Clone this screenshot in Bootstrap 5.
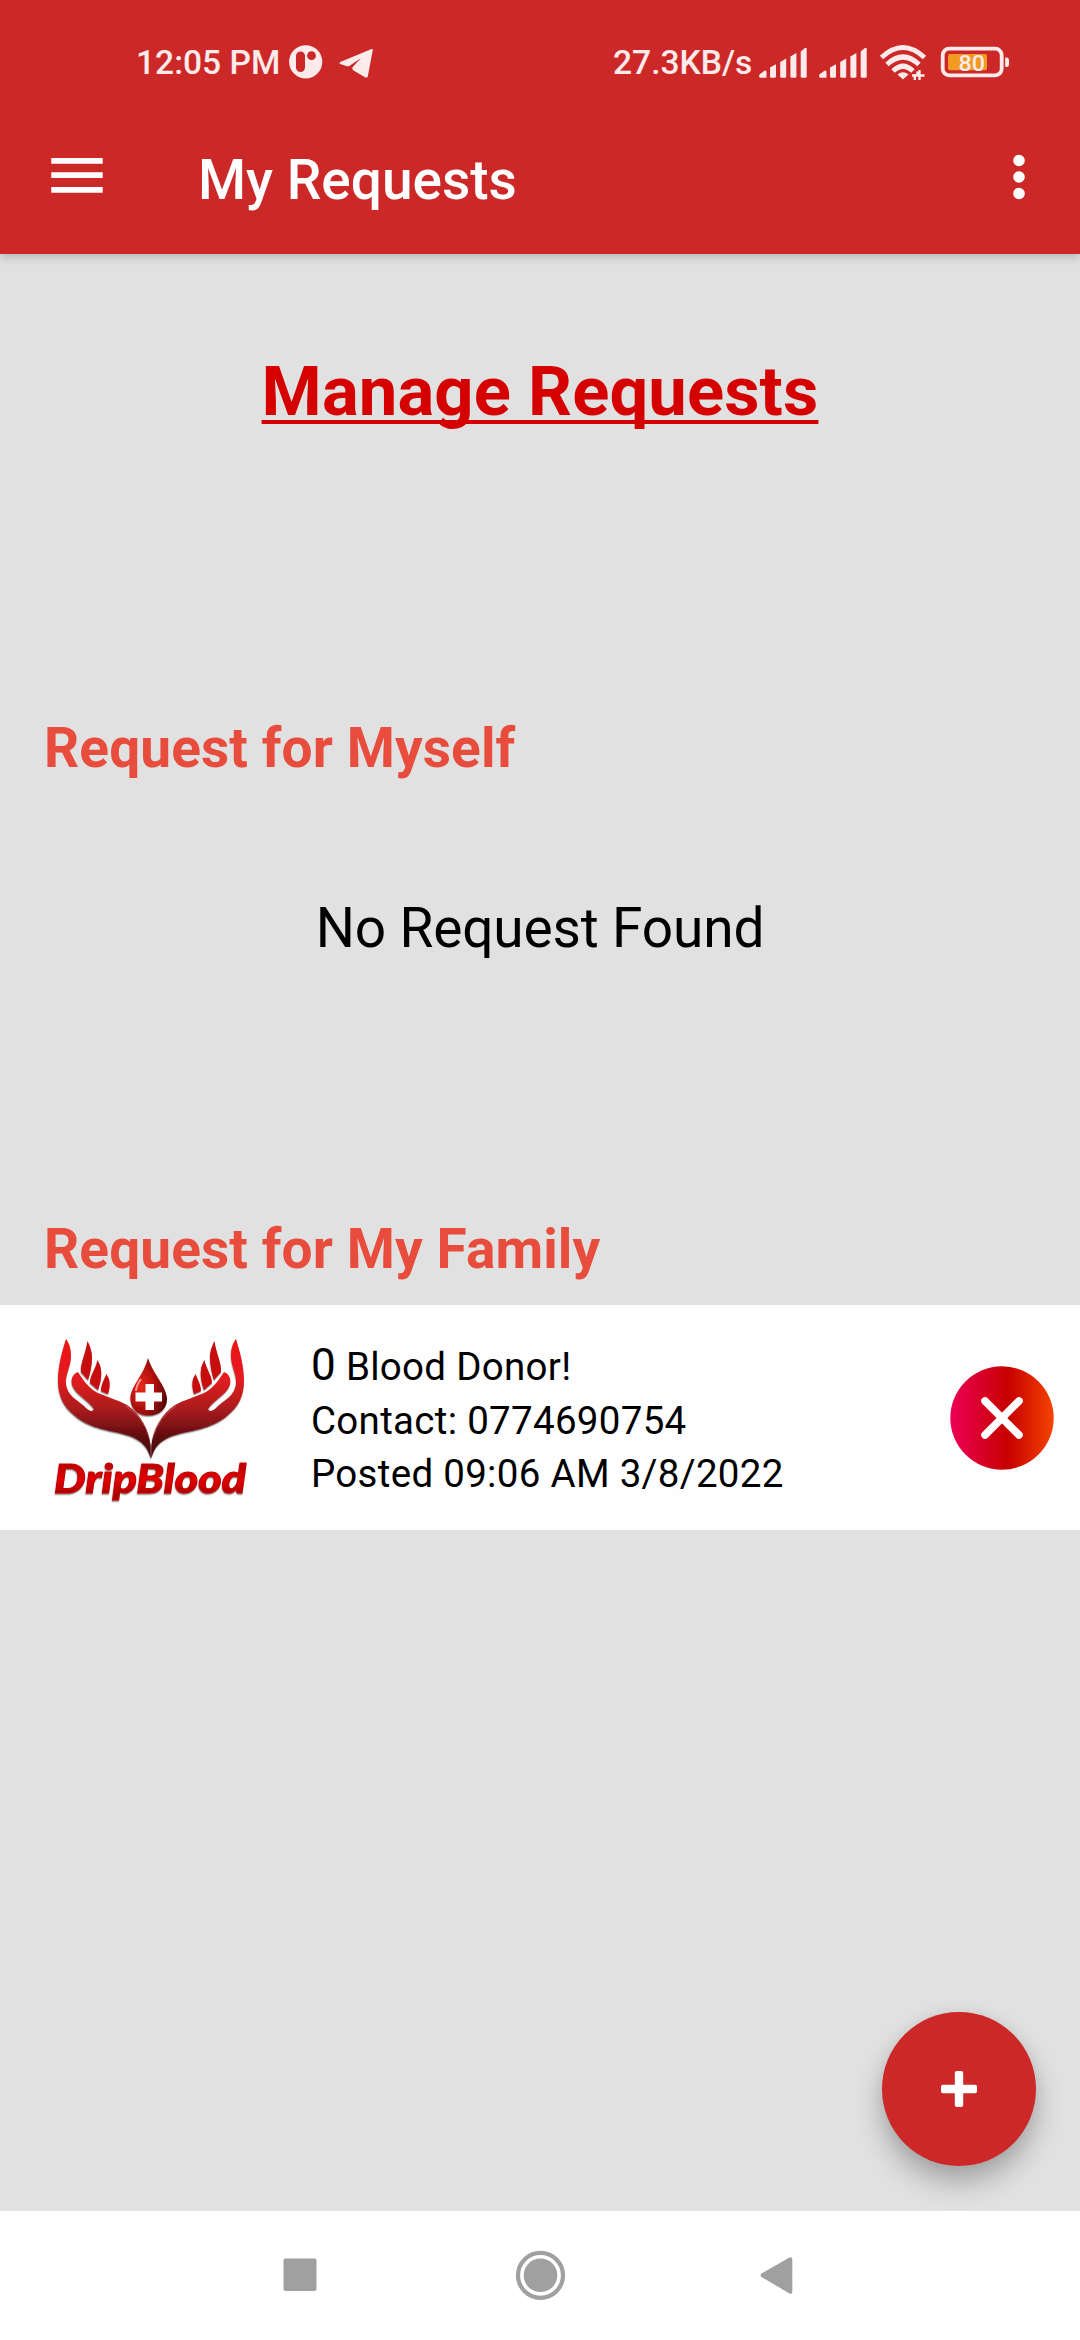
<!DOCTYPE html>
<html lang="en">
<head>
<meta charset="utf-8">
<title>My Requests</title>
<link href="https://cdn.jsdelivr.net/npm/bootstrap@5.3.0/dist/css/bootstrap.min.css" rel="stylesheet">
<style>
body{font-family:Roboto,"Liberation Sans",sans-serif;background:#e1e1e1;color:#000;width:1080px;height:2340px;overflow:hidden}
svg{display:block;flex:none}
.app-head{background:#cb2827;height:254px;box-shadow:0 3px 9px rgba(0,0,0,.2);z-index:1}
.status-row{height:124px;color:#fdeaea;font-size:33.6px;font-weight:500;line-height:40px;padding:43px 0 0 136px;white-space:nowrap}
.clock{width:152px}
.net-speed{margin-left:237px;width:146px}
.app-bar{height:129px;padding-left:51px}
.app-title{font-size:55px;font-weight:500;line-height:64px;margin:24px 0 0 95px;width:800px}
.page-title{font-size:68.75px;font-weight:700;line-height:80px;letter-spacing:.1px;color:#d50000;margin:98px 0 0;text-decoration:underline;text-decoration-thickness:3.6px;text-underline-offset:5px;text-decoration-skip-ink:none}
.sect{font-size:55px;font-weight:700;line-height:64px;letter-spacing:.1px;color:#e74c3c;padding-left:44px;margin:0}
.sect-self{margin-top:284px}
.sect-family{margin-top:257px}
.empty-note{font-size:55px;line-height:64px;letter-spacing:-.15px;margin:116px 0 0}
.request-row{background:#fefefe;height:225px;margin-top:24px}
.request-text{font-size:38.5px;line-height:53.5px;letter-spacing:.3px;margin-left:45px;padding-top:5px;width:639px;white-space:nowrap}
.donor-count{font-size:44px}
.brand-name{font:italic 900 40px Lato,sans-serif}
.fab{width:154px;height:154px;right:44px;bottom:174px;background:#cb2827;box-shadow:0 16px 28px rgba(0,0,0,.27),0 0 14px rgba(0,0,0,.05)}
.nav-keys{background:#fff;height:129px}
</style>
</head>
<body class="d-flex flex-column position-relative">
<header class="app-head flex-shrink-0 text-white">
  <div class="status-row d-flex align-items-start">
    <span class="clock">12:05 PM</span>
    <svg width="88" height="40" viewBox="288 43 88 40" fill="#fdeaea"><circle cx="305.7" cy="61.8" r="16.6"/><rect x="296" y="51.5" width="9" height="20.5" rx="4.5" fill="#cb2827"/><circle cx="311.5" cy="55.7" r="4.4" fill="#cb2827"/><path d="M340.2 62Q338.5 63.2 340.2 64L347 66.2Q348.5 66.7 350 65.5L361 58 352.5 67.2Q351.5 69 353.5 70.5L365.5 77.6Q367.3 78.3 367.9 76L372.8 50Q373 48.3 371 49.2Z"/></svg>
    <span class="net-speed">27.3KB/s</span>
    <svg width="252" height="40" viewBox="759 43 252 40"><g fill="#fdeaea"><g id="bars"><path d="M759 76Q759 75 760 74L764.5 70.8Q766.5 69.7 766.5 72V77.7H760.5Q759 77.7 759 76Z"/><path d="M770 67.5L776 64.3V76.2Q776 77.7 774.5 77.7H771.5Q770 77.7 770 76.2Z"/><path d="M780.2 62L786.2 58.5V76.2Q786.2 77.7 784.7 77.7H781.7Q780.2 77.7 780.2 76.2Z"/><path d="M790.4 56.5L796.4 53V76.2Q796.4 77.7 794.9 77.7H791.9Q790.4 77.7 790.4 76.2Z"/><path d="M800.7 51.5L805 48Q806.7 47 806.7 49V76.2Q806.7 77.7 805.2 77.7H802.2Q800.7 77.7 800.7 76.2Z"/></g><use href="#bars" x="60"/>
    <path d="M897.5 74.5Q903 70 908.5 74.5L903 79.5Z"/></g>
    <g fill="none" stroke="#fdeaea" stroke-width="5"><path d="M881.5 57.5Q903 37.500 924.5 57.5M887 64.500Q903 49.500 919 64.500M893 71Q903 61.500 913 71"/><path stroke-width="2.400" d="M912 75.500H917.5V71.5M914.800 74V80M919.500 70V80M920 75.500H924.500"/></g>
    <rect x="942.700" y="48.700" width="59" height="26.600" rx="6.500" fill="none" stroke="#fdeaea" stroke-width="3.800"/><path d="M1005.200 57.500H1007Q1009 57.500 1009 60V64Q1009 67 1007 67H1005.200Z" fill="#fdeaea"/><rect x="948" y="54" width="39" height="16.300" rx="2" fill="#f19a24"/><text x="958.500" y="70.800" font-size="22.500" font-weight="500" textLength="26.500" lengthAdjust="spacingAndGlyphs" fill="#fdeaea">80</text></svg>
  </div>
  <div class="app-bar d-flex">
    <svg width="52" height="105" viewBox="51 124 52 105" fill="#fff"><path d="M51.3 158H102.7V163.7H51.3ZM51.3 172.3H102.7V178H51.3ZM51.3 187H102.7V192.7H51.3Z"/></svg>
    <h1 class="app-title">My Requests</h1>
    <svg class="ms-auto" width="80" height="105" viewBox="1000 124 80 105" fill="#fff"><circle cx="1019" cy="160.500" r="5.800"/><circle cx="1019" cy="177" r="5.800"/><circle cx="1019" cy="193.500" r="5.800"/></svg>
  </div>
</header>
<main class="flex-grow-1">
  <h2 class="page-title text-center">Manage Requests</h2>
  <h3 class="sect sect-self">Request for Myself</h3>
  <p class="empty-note text-center">No Request Found</p>
  <h3 class="sect sect-family">Request for My Family</h3>
  <div class="request-row d-flex align-items-center">
    <svg class="ms-4" width="242" height="225" viewBox="24 1305 242 225">
      <defs>
        <linearGradient id="hand" x1="0" y1="1339" x2="0" y2="1456" gradientUnits="userSpaceOnUse"><stop offset="0" stop-color="#ed1515"/><stop offset=".35" stop-color="#e31b20"/><stop offset=".62" stop-color="#a41a1d"/><stop offset=".85" stop-color="#5d0b0d"/><stop offset="1" stop-color="#4a0809"/></linearGradient>
        <radialGradient id="drop" cx=".3" cy=".5" r=".75"><stop offset="0" stop-color="#e8291c"/><stop offset=".55" stop-color="#a90d0b"/><stop offset="1" stop-color="#4b0404"/></radialGradient>
        <linearGradient id="word" x1="0" y1="0" x2="0" y2="1"><stop offset=".2" stop-color="#b80000"/><stop offset=".55" stop-color="#e30505"/><stop offset=".85" stop-color="#a80000"/></linearGradient>
        <filter id="soft" x="-10%" y="-10%" width="120%" height="130%"><feDropShadow dx="-.3" dy="1.3" stdDeviation=".7" flood-color="#000" flood-opacity=".5"/></filter>
      </defs>
      <g filter="url(#soft)">
        <g id="palm">
          <path fill="url(#hand)" d="M66 1339C62 1352 58 1366 58 1381C58 1396 64 1407 74 1415C91 1430 112 1430 130 1436C143 1441 148 1448 150.7 1458.5V1446C149 1430 141 1414 127 1405C118 1400 107 1397 98 1393C88 1388 82 1378 78 1372C72 1374 70 1381 73 1387C78 1396 88 1400 94 1409C92 1413 88 1410 84 1406C77 1400 67 1395 66 1384C65 1375 71 1366 71 1356C71 1348 69 1343 66 1339Z"/>
          <path fill="#c70909" d="M87.5 1341C86 1353 80 1364 81 1372L88 1380C90 1374 92 1366 92 1357C92 1351 90 1346 87.5 1341ZM97.500 1360C96 1369 90 1375 90 1383L98 1390C100 1384 102 1377 101 1370C101 1366 99 1363 97.500 1360ZM106.500 1374C104 1380 101 1385 101 1391L108 1394C110 1388 110 1383 109 1379Z"/>
        </g>
        <use href="#palm" transform="matrix(-1 0 0 1 302 0)"/>
        <path fill="url(#drop)" d="M148 1358C144 1375 130 1387 130.500 1399C131 1410 139 1415.500 148.500 1415.500C159 1415.500 167 1409 167 1399C167 1387 153 1374 148 1358Z"/>
      </g>
      <path d="M145.500 1384H154V1392.500H162V1401.500H154V1410H145.500V1401.500H135.500V1392.500H145.500Z" fill="#fff"/>
      <path d="M141 1379Q136 1386 136 1391" fill="none" stroke="#ff988c" stroke-width="2"/>
      <path d="M126 1406Q144 1418 149 1437M176 1406Q158 1418 153 1437" fill="none" stroke="#d8797b" stroke-width=".6"/>
      <text class="brand-name" x="54" y="1492.500" textLength="192" lengthAdjust="spacingAndGlyphs" fill="url(#word)" stroke="#c40000" stroke-width="1" filter="url(#soft)">DripBlood</text>
    </svg>
    <div class="request-text"><div><span class="donor-count">0</span> Blood Donor!</div><div>Contact: 0774690754</div><div>Posted 09:06 AM 3/8/2022</div></div>
    <svg width="104" height="104" viewBox="0 0 104 104" role="img" aria-label="Delete"><defs><linearGradient id="del"><stop offset="0" stop-color="#ec0055"/><stop offset=".56" stop-color="#c70000"/><stop offset="1" stop-color="#f54400"/></linearGradient></defs><circle cx="52" cy="52" r="51.700" fill="url(#del)"/><path d="M35 35L69 69M69 35L35 69" stroke="#fff" stroke-width="7.600" stroke-linecap="round"/></svg>
  </div>
</main>
<button class="fab btn border-0 rounded-circle position-absolute d-flex align-items-center justify-content-center p-0" aria-label="Add request"><svg width="36" height="36" viewBox="0 0 36 36" fill="#fff"><rect x="13.800" width="8.400" height="36" rx="2"/><rect y="13.800" width="36" height="8.400" rx="2"/></svg></button>
<nav class="nav-keys flex-shrink-0">
  <svg width="1080" height="129" viewBox="0 2211 1080 129" fill="#a0a0a0"><rect x="283.500" y="2258.500" width="33" height="32.500" rx="2"/><circle cx="540.500" cy="2275.300" r="22.500" fill="none" stroke="#a0a0a0" stroke-width="4.200"/><circle cx="540.500" cy="2275.300" r="16.800"/><path d="M761.500 2273.500L789.500 2257.500Q792.300 2256.500 792.300 2259.500V2291.500Q792.300 2294.500 789.500 2293.500L761.500 2277Q759.500 2275.300 761.500 2273.500Z"/></svg>
</nav>
<script src="https://cdn.jsdelivr.net/npm/bootstrap@5.3.0/dist/js/bootstrap.bundle.min.js"></script>
</body>
</html>
